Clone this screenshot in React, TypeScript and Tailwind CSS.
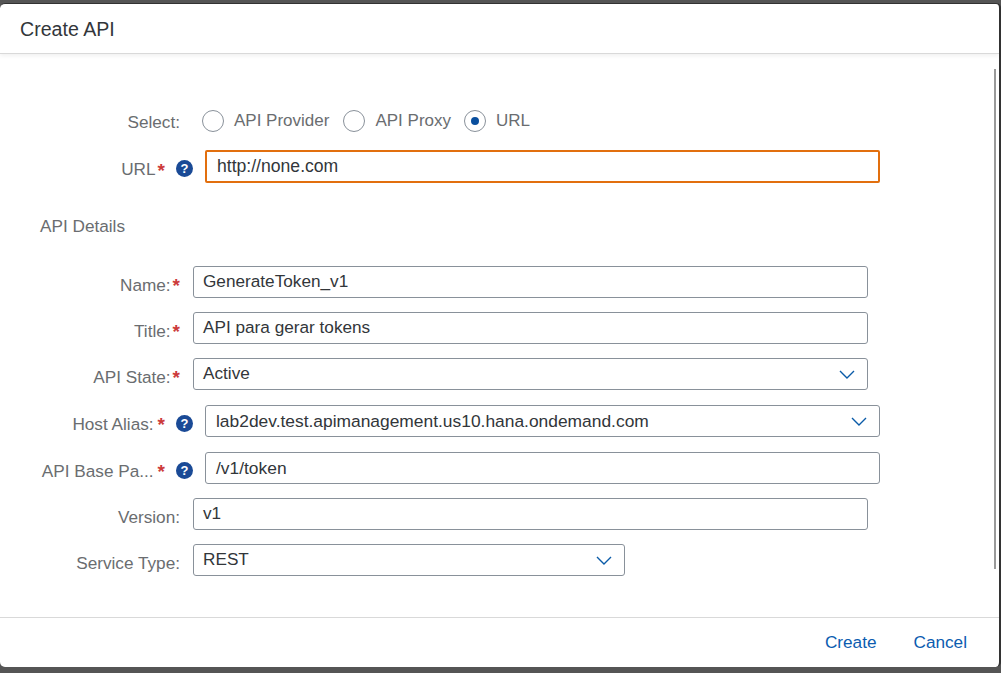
import React from 'react';

function Help() {
  return (
    <span className="flex h-[17px] w-[17px] items-center justify-center rounded-full bg-[#1a4a96] text-[13px] font-bold leading-none text-white">
      ?
    </span>
  );
}

function Star({ wide }: { wide?: boolean }) {
  return (
    <span className={`text-[19px] font-bold leading-none text-[#cc3a3a] ${wide ? 'ml-[4px]' : 'ml-[2px]'}`}>*</span>
  );
}

function Chevron() {
  return (
    <svg width="16" height="9" viewBox="0 0 16 9" fill="none" className="shrink-0">
      <path d="M1 1l7 7 7-7" stroke="#0a5ba8" strokeWidth="1.4" />
    </svg>
  );
}

function Field({
  label,
  required,
  help,
  value,
  select,
  width,
  top,
}: {
  label: string;
  required?: boolean;
  help?: boolean;
  value: string;
  select?: boolean;
  width: string;
  top: string;
}) {
  return (
    <div className={`flex h-8 ${top}`}>
      <div className="flex w-[180px] items-center justify-end pt-[7px] text-[17.2px] text-[#6a6d70]">
        <span className="whitespace-nowrap">{label}</span>
        {required && <Star wide={help} />}
        {help && (
          <span className="-mr-[13px] -mt-[3px] ml-[11px]">
            <Help />
          </span>
        )}
      </div>
      <div
        className={`flex items-center justify-between rounded-[3px] border border-[#89919a] bg-white pr-3 text-[#32363a] ${help ? 'ml-[25px] pl-[10px] text-[17.4px]' : 'ml-[13px] pl-[9px] text-[17.2px]'} ${width}`}
      >
        <span>{value}</span>
        {select && <Chevron />}
      </div>
    </div>
  );
}

export default function App() {
  return (
    <div
      className="flex h-[673px] w-[1001px] flex-col overflow-hidden bg-[#555555] pb-[6px] pt-[3px]"
      style={{ fontFamily: '"Liberation Sans", Arial, sans-serif' }}
    >
      <div className="relative flex flex-1 flex-col rounded-[5px] border-r-2 border-t border-[#333333] bg-white">
        <header className="flex h-[50px] items-center border-b border-[#d9d9d9] pl-5 pt-[2px] text-[19.6px] text-[#32363a] shadow-[0_2px_4px_rgba(0,0,0,0.06)]">
          Create API
        </header>

        <div className="flex-1">
          <div className="mt-[55px] flex h-6 items-center">
            <div className="w-[180px] pt-1 text-right text-[17.2px] text-[#6a6d70]">Select:</div>
            <div className="ml-[22px] flex items-center text-[17px] text-[#6a6d70]">
              <span className="h-[22px] w-[22px] rounded-full border border-[#89919a] bg-white" />
              <span className="ml-[10px]">API Provider</span>
              <span className="ml-[14px] h-[22px] w-[22px] rounded-full border border-[#89919a] bg-white" />
              <span className="ml-[10px]">API Proxy</span>
              <span className="ml-[13px] flex h-[22px] w-[22px] items-center justify-center rounded-full border border-[#89919a] bg-white">
                <span className="h-2 w-2 rounded-full bg-[#0a4f9e]" />
              </span>
              <span className="ml-[10px]">URL</span>
            </div>
          </div>

          <div className="mt-[17px] flex h-[33px]">
            <div className="flex w-[180px] items-center justify-end pt-[7px] text-[17.2px] text-[#6a6d70]">
              URL
              <Star />
              <span className="-mr-[13px] -mt-[3px] ml-[11px]">
                <Help />
              </span>
            </div>
            <div className="ml-[25px] flex w-[675px] items-center rounded-[2px] border-2 border-[#e26f0e] pl-[10px] text-[17.6px] text-[#32363a]">
              http://none.com
            </div>
          </div>

          <div className="ml-10 mt-[33px] text-[17.2px] leading-[20px] text-[#6a6d70]">API Details</div>

          <Field top="mt-[30px]" label="Name:" required value="GenerateToken_v1" width="w-[675px]" />
          <Field top="mt-[14px]" label="Title:" required value="API para gerar tokens" width="w-[675px]" />
          <Field top="mt-[14px]" label="API State:" required value="Active" select width="w-[675px]" />
          <Field top="mt-[15px]" label="Host Alias:" required help value="lab2dev.test.apimanagement.us10.hana.ondemand.com" select width="w-[675px]" />
          <Field top="mt-[15px]" label="API Base Pa..." required help value="/v1/token" width="w-[675px]" />
          <Field top="mt-[14px]" label="Version:" value="v1" width="w-[675px]" />
          <Field top="mt-[14px]" label="Service Type:" value="REST" select width="w-[432px]" />
        </div>

        <footer className="flex h-[50px] items-center justify-end gap-[37px] border-t border-[#d9d9d9] pr-[32px] text-[17.2px] text-[#0b5cb0]">
          <span>Create</span>
          <span>Cancel</span>
        </footer>

        <div className="absolute right-[3px] top-[65px] h-[500px] w-[2px] bg-[#9a9a9a]" />
      </div>
    </div>
  );
}
